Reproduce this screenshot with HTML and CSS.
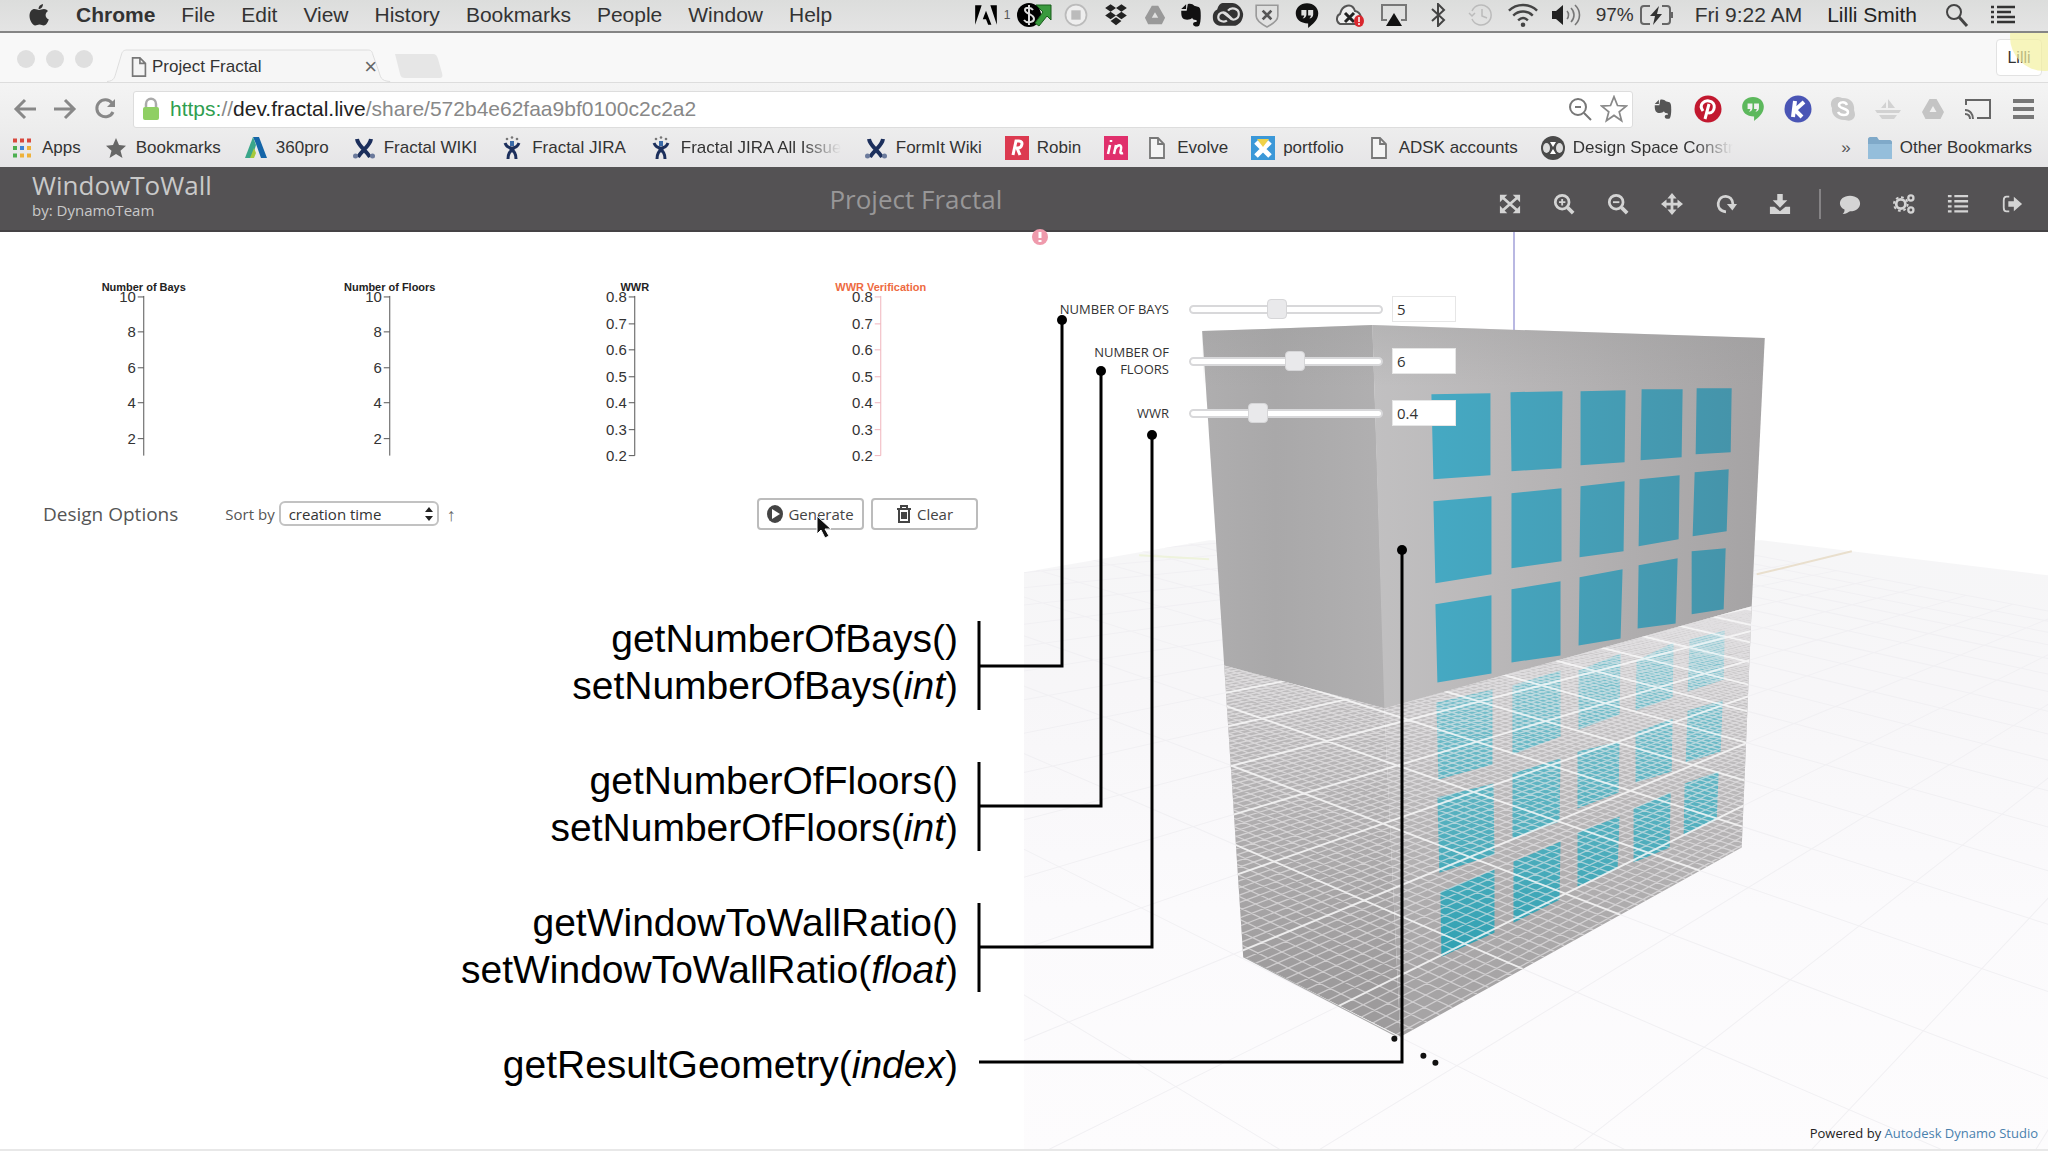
FILE: index.html
```html
<!DOCTYPE html>
<html lang="en">
<head>
<meta charset="utf-8">
<title>Project Fractal</title>
<link rel="stylesheet" href="styles.css">
</head>
<body>
<svg class="defs" width="0" height="0" aria-hidden="true">
  <symbol id="elephant" viewBox="0 0 24 24"><path d="M9 2c2-1 5 0 6 1.500l4 1c2 1 2 5 2 8 0 4-.5 8-1.500 9.500-1 1-5 1-5.500-1s1-3 3-2.500c.5-1 .5-2-.5-2-2 0-3-.5-3.500-2-1 2-5 2-7 1.500-3-1-3-5-3-8h5z M3 6.500L7.500 2v4.500z"/></symbol>
  <symbol id="page" viewBox="0 0 24 24"><path d="M5 2h8l6 6v14H5z M13 2v6h6" fill="#f4f4f4" stroke="#777" stroke-width="1.800"/></symbol>
  <symbol id="quote" viewBox="0 0 24 24"><path fill-rule="evenodd" d="M12 1c6 0 10 4 10 9 0 6-5 10-9 13v-4C6 19 2 15 2 10s4-9 10-9zM7 7v5h2.500c0 1-.5 2-1.500 2.500 2 0 3.500-1.500 3.500-3.500V7zM13 7v5h2.500c0 1-.5 2-1.500 2.500 2 0 3.500-1.500 3.500-3.500V7z"/></symbol>
  <symbol id="drive" viewBox="0 0 24 24"><path fill-rule="evenodd" d="M8.500 2h7l7.500 13-3.500 7h-15L1 15zM12 9l-3.500 6h7z"/></symbol>
  <symbol id="wiki" viewBox="0 0 24 24"><path d="M5 3c1 7 8 10 13 18M19 3c-1 7-8 10-13 18" fill="none" stroke="#1c2f5c" stroke-width="4"/><circle cx="3.500" cy="20" r="2.500" fill="#6b7a9c"/><circle cx="20.500" cy="20" r="2.500" fill="#6b7a9c"/></symbol>
  <symbol id="jira" viewBox="0 0 24 24"><path d="M5 7c2 5 5 5 7 5s5 0 7-5M8 23c0-5 1-7 7-12M16 23c0-5-1-7-7-12" fill="none" stroke="#1c2f5c" stroke-width="3"/><path d="M12 5v5" stroke="#3a6aa8" stroke-width="4"/><g fill="#777"><circle cx="7" cy="3" r="1.300"/><circle cx="12" cy="1.500" r="1.300"/><circle cx="17" cy="3" r="1.300"/></g></symbol>
</svg>

<header class="menubar">
  <nav class="menus" aria-label="Menu bar">
    <svg width="22" height="26" viewBox="0 0 22 26" fill="#333"><path d="M15 2c0 3-2 5-4.500 5C10.500 4.500 12 2.500 15 2zM11 8c1.500 0 3-1 5-1 1.500 0 3 .8 4 2-3.500 2-3 7 .8 8.500-1 3-3 6-5 6-1.600 0-2.300-1-4.300-1s-2.700 1-4.300 1C4.500 23.500 1.500 18 1.500 14c0-4.500 2.500-7 5-7 2 0 3.300 1 4.500 1z"/></svg>
    <a href="#" class="app">Chrome</a><a href="#">File</a><a href="#">Edit</a><a href="#">View</a><a href="#">History</a><a href="#">Bookmarks</a><a href="#">People</a><a href="#">Window</a><a href="#">Help</a>
  </nav>
  <div class="status">
    <svg width="36" height="26" viewBox="0 0 24 24"><path d="M2 3h6L2 21zM16 3h6v18zM12 8l5 13h-3l-2-5H9z"/></svg><span class="count">1</span>
    <svg width="44" height="28" viewBox="0 0 36 28"><circle cx="13" cy="14" r="12"/><path d="M17 9c-2-3-8-3-8 0 0 4 9 4 9 9 0 3-7 5-10 1M13 4v20" stroke="#ddd" stroke-width="2" fill="none"/><path d="M20 4h15v15l-4-4-8 10-4-3 8-11z" fill="#3a9a3e" stroke="#185c1b"/></svg>
    <svg width="40" height="28" viewBox="0 0 24 24"><circle cx="12" cy="12" r="9" fill="#eee" stroke="#bbb" stroke-width="1.500"/><path d="M8 8h8v8H8z" fill="#bbb"/></svg>
    <svg width="40" height="26" viewBox="0 0 24 24" fill="#222"><path d="M7 2l5 3.500L7 9 2 5.500zM17 2l5 3.500L17 9l-5-3.500zM7 9l5 3.500L7 16l-5-3.500zM17 9l5 3.500-5 3.500-5-3.500zM12 14l5 3.500-5 4-5-4z"/></svg>
    <svg width="38" height="22" fill="#999"><use href="#drive"/></svg>
    <svg width="34" height="26" fill="#111"><use href="#elephant"/></svg>
    <svg width="40" height="26" viewBox="0 0 30 24"><path d="M10 1h9c4 0 9 4 10 10 0 6-4 11-9 11H9c-5 0-8-3-8-8 0-4 2-6 4-7 1-4 3-6 5-6z" fill="#333"/><path d="M14 17c-2 2-8 1-8-3s5-6 8-3l5 5M15 8c3-4 10-2 10 3s-6 7-9 3l-5-4" stroke="#ddd" stroke-width="2" fill="none"/></svg>
    <svg width="38" height="26" viewBox="0 0 24 24" fill="none" stroke="#999" stroke-width="1.500"><path d="M2 3h20v10c0 5-6 8-10 10-4-2-10-5-10-10z"/><path d="M8 8l8 8M16 8l-8 8" stroke="#555" stroke-width="2.500"/></svg>
    <svg width="42" height="27" fill="#111"><use href="#quote"/></svg>
    <svg width="44" height="26" viewBox="0 0 30 26"><path d="M5 22C0 19 2 13 5 12 7 3 17 0 20 9c6 1 8 9 4 13z" fill="#eee" stroke="#555" stroke-width="2"/><path d="M10 11l9 9M19 11l-9 9" stroke="#222" stroke-width="3"/><ellipse cx="24" cy="19" rx="5" ry="6" fill="#d9272e"/><path d="M24 15v5M24 21v2" stroke="#fff" stroke-width="1.500"/></svg>
    <svg width="44" height="24" viewBox="0 0 28 24"><path d="M7 17H2V2h24v15h-5" fill="none" stroke="#777" stroke-width="2"/><path d="M14 10l8 13H6z" fill="#111"/></svg>
    <svg width="44" height="24" viewBox="0 0 24 24"><path d="M6 6l12 11-6 6V1l6 6L6 18" fill="none" stroke="#444" stroke-width="2"/></svg>
    <svg width="42" height="24" viewBox="0 0 26 24" fill="none" stroke="#bbb" stroke-width="1.500"><path d="M4 8a10 10 0 1 1 0 8M1 10l3 3 3-3M14 6v7l5 2"/></svg>
    <svg width="42" height="26" viewBox="0 0 28 24" fill="none" stroke="#444" stroke-width="2.200"><path d="M1 8c7-7 19-7 26 0M5 12.500c5-5 13-5 18 0M9.500 17c3-3 6-3 9 0"/><circle cx="14" cy="21" r="1" fill="#444"/></svg>
    <svg width="44" height="24" viewBox="0 0 30 24"><path d="M1 8h4l7-6v20l-7-6H1z" fill="#222"/><path d="M16 8c2 2 2 6 0 8M20 5c4 4 4 10 0 14M24 2c6 6 6 14 0 20" fill="none" stroke="#777" stroke-width="1.600"/></svg>
    <span class="percent">97%</span>
    <svg width="36" height="22" viewBox="0 0 36 22"><path d="M11 2H5C3 2 2 3 2 5v12c0 2 1 3 3 3h6M23 2h5c2 0 3 1 3 3v12c0 2-1 3-3 3h-5M33 8v6" fill="none" stroke="#666" stroke-width="2"/><path d="M20 2l-9 10h5l-2 9 9-11h-5z" fill="#333"/></svg>
    <time class="clock">Fri 9:22 AM</time>
    <span class="user">Lilli Smith</span>
    <svg class="find" width="24" height="24" viewBox="0 0 24 24" fill="none" stroke="#444" stroke-width="2"><circle cx="9" cy="9" r="7"/><path d="M14 14l8 9" stroke-width="3"/></svg>
    <svg width="28" height="20" viewBox="0 0 28 20" stroke="#333" stroke-width="2.500"><path d="M2 2h3M8 2h18M2 7h3M8 7h14M2 12h3M8 12h18M2 17h3M8 17h18"/></svg>
  </div>
</header>

<div class="browser">
  <div class="tabstrip">
    <div class="lights"><i></i><i></i><i></i></div>
    <div class="tab">
      <svg class="tabshape" viewBox="0 0 300 33" preserveAspectRatio="none"><path d="M0 32.500C8 32 8 28 10 22l5-16c1-4 3-5 6-5h252c4 0 5 1 6 5l6 16c2 6 2 10 12 10.500" fill="#f6f6f6" stroke="#ddd"/></svg>
      <svg width="22" height="22"><use href="#page"/></svg>
      <span>Project Fractal</span>
      <button class="close" aria-label="Close tab">×</button>
    </div>
    <svg class="newtab" width="50" height="26" viewBox="0 0 50 26"><path d="M2 1h38c3 0 4 2 5 5l4 14c1 4 0 5-3 5H12c-3 0-4-1-5-4z" fill="#e6e6e6"/></svg>
    <button class="profile">Lilli</button>
    <span class="halo"></span>
  </div>
  <div class="toolbar">
    <button aria-label="Back"><svg width="24" height="24" viewBox="0 0 24 24" class="nav"><path d="M23 12H3M12 3l-9 9 9 9"/></svg></button>
    <button aria-label="Forward"><svg width="24" height="24" viewBox="0 0 24 24" class="nav"><path d="M1 12h20M12 3l9 9-9 9"/></svg></button>
    <button aria-label="Reload"><svg width="24" height="24" viewBox="0 0 24 24" class="nav"><path d="M20 15a8.500 8.500 0 1 1-1-9"/><path d="M22 2v8h-8z" fill="#888" stroke="none"/></svg></button>
    <div class="address">
      <svg width="18" height="24" viewBox="0 0 18 24"><path d="M4 11V7c0-7 10-7 10 0v4" fill="none" stroke="#aaa" stroke-width="2.500"/><rect x="1" y="10" width="16" height="13" rx="2" fill="#8fcf63"/></svg>
      <div class="url" role="textbox" contenteditable="true" aria-label="Address"><span class="scheme">https:</span><span class="rest">//</span>dev.fractal.live<span class="rest">/share/572b4e62faa9bf0100c2c2a2</span></div>
      <svg width="24" height="24" viewBox="0 0 24 24" fill="none" stroke="#777" stroke-width="2"><circle cx="10" cy="10" r="8"/><path d="M16 16l7 7M7 10h6"/></svg>
      <svg width="28" height="28" viewBox="0 0 24 24" fill="none" stroke="#888" stroke-width="1.500"><path d="M12 1.500l3 7.500 7.500.5-6 5 2 7.500-6.500-4.500L5.500 22l2-7.500-6-5L9 9z"/></svg>
    </div>
    <div class="extensions">
      <svg width="28" height="22" fill="#555"><use href="#elephant"/></svg>
      <svg width="28" height="28" viewBox="0 0 28 28"><circle cx="14" cy="14" r="13.500" fill="#c2182f"/><path d="M9 16c-5-7 2-11 6-10 8 1 6 12 0 12-2 0-2-1-2.500-2M15 9l-4 15" fill="none" stroke="#fff" stroke-width="3"/></svg>
      <svg width="28" height="26" fill="#5cb85c"><use href="#quote"/></svg>
      <svg width="28" height="28" viewBox="0 0 28 28"><circle cx="14" cy="14" r="13.500" fill="#4a55b5"/><path d="M11 6L9 22M20 7l-9 8 7 7" fill="none" stroke="#fff" stroke-width="4"/></svg>
      <svg width="28" height="26" viewBox="0 0 26 26"><path d="M3 3c5-4 8-1 10-1 8 0 12 6 11 12 1 3 2 6-1 9-3 3-7 1-9 1C6 24 1 18 2 12 0 9 1 5 3 3z" fill="#cacaca"/><path d="M17 9c-2-4-8-3-8 0 0 4 9 3 9 7 0 4-8 4-10 0" fill="none" stroke="#fff" stroke-width="2.500"/></svg>
      <svg width="28" height="22" viewBox="0 0 28 22" fill="#d2d2d2"><path d="M14 1v9h7zM12 4v6H7zM1 12h26l-2 3H3zM5 17h18l-3 4H8z"/></svg>
      <svg width="28" height="24" fill="#c4c4c4"><use href="#drive"/></svg>
      <svg width="28" height="22" viewBox="0 0 28 22" fill="none" stroke="#666" stroke-width="2"><path d="M2 7V2h24v18H13M1 12c5 0 8 4 8 9M1 16c3 0 5 2 5 5"/></svg>
      <svg width="28" height="22" viewBox="0 0 28 22" stroke="#777" stroke-width="4"><path d="M4 3h21M4 11h21M4 19h21"/></svg>
    </div>
  </div>
  <nav class="bookmarks" aria-label="Bookmarks">
    <a href="#"><svg width="24" height="24" viewBox="0 0 24 24"><path d="M3 4.500h4M10 4.500h4M17 4.500h4" stroke="#d8493e" stroke-width="4"/><path d="M3 12h4" stroke="#4caf50" stroke-width="4"/><path d="M10 12h4" stroke="#3b82d6" stroke-width="4"/><path d="M17 12h4M10 19.500h4M17 19.500h4" stroke="#eeb13a" stroke-width="4"/><path d="M3 19.500h4" stroke="#4caf50" stroke-width="4"/></svg>Apps</a>
    <a href="#"><svg width="24" height="24" viewBox="0 0 24 24"><path d="M12 2l3 7 7 .7-5.500 5 2 7.300-6.500-4-6.500 4 2-7.300L2 9.700 9 9z" fill="#666"/></svg>Bookmarks</a>
    <a href="#"><svg width="24" height="24" viewBox="0 0 24 24"><path d="M9 1h6l8 21h-6l-5-14z" fill="#1565a8"/><path d="M9 1l3 8-4 13H1z" fill="#3aa68a"/><path d="M6 22l4-10 2 5 -2 5z" fill="#a6c93c"/></svg>360pro</a>
    <a href="#"><svg width="24" height="24"><use href="#wiki"/></svg>Fractal WIKI</a>
    <a href="#"><svg width="24" height="24"><use href="#jira"/></svg>Fractal JIRA</a>
    <a href="#"><svg width="24" height="24"><use href="#jira"/></svg><span class="faded">Fractal JIRA All Issues</span></a>
    <a href="#"><svg width="24" height="24"><use href="#wiki"/></svg>FormIt Wiki</a>
    <a href="#"><svg width="24" height="24" viewBox="0 0 24 24"><path d="M0 0h24v24H0z" fill="#dc3a50"/><path d="M8 19l3-14h3c5 0 3 7-1 7h-2M12 12l3 7" fill="none" stroke="#fff" stroke-width="3"/></svg>Robin</a>
    <a href="#" class="lone" aria-label="Invision"><svg width="24" height="24" viewBox="0 0 24 24"><path d="M0 0h24v24H0z" fill="#e0306c"/><path d="M6 9l-2 9M7 4v2M10 18l2-9M11 13c3-5 7-5 6 0-1 4-1 5 2 4" fill="none" stroke="#fff" stroke-width="2.500"/></svg></a>
    <a href="#"><svg width="24" height="24"><use href="#page"/></svg>Evolve</a>
    <a href="#"><svg width="24" height="24" viewBox="0 0 24 24"><path d="M0 0h24v24H0z" fill="#3b98d8"/><path d="M5 6l14 14M19 6L5 20" stroke="#fff" stroke-width="5"/><path d="M6 3h12l-6 8z" fill="#efd24a"/></svg>portfolio</a>
    <a href="#"><svg width="24" height="24"><use href="#page"/></svg>ADSK accounts</a>
    <a href="#"><svg width="24" height="24" viewBox="0 0 24 24"><circle cx="12" cy="12" r="12" fill="#4a4a4a"/><ellipse cx="5.500" cy="12" rx="3.500" ry="5" fill="#ddd"/><ellipse cx="18.500" cy="12" rx="3.500" ry="5" fill="#ddd"/><path d="M9 6h6l-3 5zM9 18h6l-3-5z" fill="#fff"/></svg><span class="faded">Design Space Construction</span></a>
    <button class="more" aria-label="More bookmarks">»</button>
    <a href="#"><svg width="24" height="24" viewBox="0 0 24 24"><path d="M0 3c0-1 1-2 2-2h7l2 3h11c1 0 2 1 2 2v16H0z" fill="#7fa9c9"/><path d="M0 8h24v15H0z" fill="#95bedb"/></svg>Other Bookmarks</a>
  </nav>
</div>

<header class="appbar">
  <div class="project"><h1>WindowToWall</h1><p>by: DynamoTeam</p></div>
  <div class="product">Project Fractal</div>
  <div class="tools">
    <button aria-label="Fit view"><svg viewBox="0 0 24 24"><path d="M1 2h8L1 10zM23 2v8l-8-8zM1 22v-8l8 8zM23 22h-8l8-8z" fill="#d4d4d4" stroke="none"/><path d="M4 5l16 14M20 5L4 19"/></svg></button>
    <button aria-label="Zoom in"><svg viewBox="0 0 24 24"><circle cx="10" cy="10" r="7.500"/><path d="M16 16l6 6" stroke-width="4"/><path d="M10 6.500v7M6.500 10h7" stroke-width="2"/></svg></button>
    <button aria-label="Zoom out"><svg viewBox="0 0 24 24"><circle cx="10" cy="10" r="7.500"/><path d="M16 16l6 6" stroke-width="4"/><path d="M6.500 10h7" stroke-width="2"/></svg></button>
    <button aria-label="Pan"><svg viewBox="0 0 24 24"><path d="M12 3v18M3 12h18"/><path d="M12 0l5 6H7zM12 24l5-6H7zM0 12l6-5v10zM24 12l-6-5v10z" fill="#d4d4d4" stroke="none"/></svg></button>
    <button aria-label="Orbit"><svg viewBox="0 0 24 24"><path d="M12 20.500C5 20 3 15 3.500 11 5 1 19 1 19.500 12"/><path d="M13 12h11l-5 7z" fill="#d4d4d4" stroke="none"/></svg></button>
    <button aria-label="Download"><svg viewBox="0 0 24 24"><path d="M9 1h6v7h5l-8 8-8-8h5zM1 15h5l6 5 6-5h5v8H1z" fill="#d4d4d4" stroke="none"/></svg></button>
    <span class="rule"></span>
    <button aria-label="Comments"><svg viewBox="0 0 24 24"><path d="M12 3c7 0 11 4 11 8.500S19 20 12 20c-2 1-4 3-8 3 2-2 2-3 2-5-3-1-5-4-5-6.500C1 7 5 3 12 3z" fill="#d4d4d4" stroke="none"/></svg></button>
    <button aria-label="Settings"><svg viewBox="0 0 24 24"><circle cx="8.500" cy="12" r="5"/><circle cx="8.500" cy="12" r="7.500" stroke-width="2" stroke-dasharray="3 2.900"/><circle cx="19.500" cy="5.500" r="2.800" stroke-width="2.500"/><circle cx="19.500" cy="18.500" r="2.800" stroke-width="2.500"/></svg></button>
    <button aria-label="List"><svg viewBox="0 0 24 24"><path d="M1 3.500h4M8 3.500h15M1 9h4M8 9h15M1 14.500h4M8 14.500h15M1 20h4M8 20h15" stroke-width="2.500"/></svg></button>
    <button aria-label="Sign out"><svg viewBox="0 0 24 24"><path d="M9 4H6C3 4 3 6 3 8v8c0 2 0 4 3 4h3" stroke-width="2"/><path d="M8 9h6V4l9 8-9 8v-5H8z" fill="#d4d4d4" stroke="none"/></svg></button>
  </div>
</header>

<main class="workspace">
  <section class="panel">
    <div class="charts">
      <svg class="chart" viewBox="0 0 246 184" id="bays"><text class="title" x="122" y="23">Number of Bays</text></svg>
      <svg class="chart" viewBox="0 0 246 184" id="floors"><text class="title" x="122" y="23">Number of Floors</text></svg>
      <svg class="chart" viewBox="0 0 246 184" id="wwr"><text class="title" x="122" y="23">WWR</text></svg>
      <svg class="chart check" viewBox="0 0 246 184" id="verify"><text class="title" x="122" y="23">WWR Verification</text></svg>
    </div>
    <div class="options">
      <h2>Design Options</h2>
      <label for="sort">Sort by</label>
      <span class="select"><select id="sort"><option>creation time</option></select><svg width="10" height="16" viewBox="0 0 10 16"><path d="M5 1l4 5H1zM5 15l4-5H1z" fill="#222"/></svg></span>
      <button class="order" aria-label="Ascending">↑</button>
      <button class="action generate"><svg width="16" height="18" viewBox="0 0 16 18"><ellipse cx="8" cy="9" rx="8" ry="9" fill="#444"/><path d="M5 4l8 5-8 5z" fill="#fff"/></svg>Generate
        <svg class="cursor" width="16" height="24" viewBox="0 0 16 24"><path d="M1 1v18l4-4 4 8 4-2-4-7h6z" fill="#111" stroke="#fff"/></svg></button>
      <button class="action"><svg width="16" height="18" viewBox="0 0 16 18" fill="none" stroke="#444" stroke-width="2"><path d="M3 5v12h10V5M1 4h14M5 4V1h6v3M6 7v7M8 7v7M10 7v7"/></svg>Clear</button>
    </div>
    <div class="api">
      <p>getNumberOfBays()<br>setNumberOfBays(<em>int</em>)</p>
      <p>getNumberOfFloors()<br>setNumberOfFloors(<em>int</em>)</p>
      <p>getWindowToWallRatio()<br>setWindowToWallRatio(<em>float</em>)</p>
      <p>getResultGeometry(<em>index</em>)</p>
    </div>
  </section>

  <section class="viewer">
    <svg class="scene" viewBox="1025 232 1023 918" preserveAspectRatio="xMinYMin slice" role="img" aria-label="Building model">
      <defs>
        <linearGradient id="left" x1="0" y1="0" x2="1" y2="0"><stop offset="0" stop-color="#afaeaf"/><stop offset=".4" stop-color="#a9a8a9"/><stop offset="1" stop-color="#b1b0b1"/></linearGradient>
        <linearGradient id="front" x1="0" y1="0" x2="1" y2="0"><stop offset="0" stop-color="#c1c0c1"/><stop offset=".3" stop-color="#bab8b9"/><stop offset="1" stop-color="#a5a3a4"/></linearGradient>
        <linearGradient id="topshade" x1="0" y1="0" x2="0" y2="1"><stop offset="0" stop-color="#999" stop-opacity=".3"/><stop offset=".5" stop-color="#999" stop-opacity="0"/></linearGradient>
        <linearGradient id="glass" gradientUnits="userSpaceOnUse" x1="1432" y1="0" x2="1732" y2="0"><stop offset="0" stop-color="#45a9c3"/><stop offset="1" stop-color="#4594aa"/></linearGradient>
        <linearGradient id="ground" x1="0" y1="0" x2="0" y2="1"><stop offset="0" stop-color="#f6f6f7"/><stop offset=".25" stop-color="#f7f6f8"/><stop offset=".6" stop-color="#fbfafc"/><stop offset="1" stop-color="#fdfcfd"/></linearGradient>
        <linearGradient id="veil" gradientUnits="userSpaceOnUse" x1="0" y1="606" x2="0" y2="980"><stop offset="0" stop-color="#f4f2f4" stop-opacity=".5"/><stop offset=".4" stop-color="#f4f2f4" stop-opacity=".3"/><stop offset="1" stop-color="#f4f2f4" stop-opacity="0"/></linearGradient>
        <clipPath id="under"><path d="M1225 665L1385 708 1752 606 1742 847 1400 1036 1244 956z"/></clipPath>
        <clipPath id="floorclip"><path d="M1025 572L1210 540H1762L2048 575V1152H1025z"/></clipPath>
      </defs>
      <path d="M1025 572L1210 540H1762L2048 575V1152H1025z" fill="url(#ground)"/>
      <g clip-path="url(#floorclip)"><path id="floor-major" fill="none" stroke="#f1f0f3"/></g>
      <path d="M1140 555l70 4" stroke="#eef3dc" stroke-width="2"/><path d="M1757 574l95-23" stroke="#e9dfcd" stroke-width="2"/><path d="M1514.500 232v98" stroke="#b9b8e2" stroke-width="2"/>
      <path d="M1203 331l170-6 13 383-161-43z" fill="url(#left)"/>
      <path d="M1373 325l392 13-13 268-367 102z" fill="url(#front)"/>
      <path d="M1203 331l170-6 392 13-3 70-389 0-167 40z" fill="url(#topshade)"/>
      <path d="M1225 665l160 43 16 328-157-80z" fill="#9d9b9c"/>
      <path d="M1385 708l367-102-10 241-341 189z" fill="#a6a4a5"/>
      <g fill="url(#glass)">
        <path d="M1432 394l59-1v82l-57 4zM1434 501l58-5v78l-56 9zM1436 604l56-9v78l-54 9z"/>
        <path d="M1511 392l52-1-1 77-50 3zM1512 493l50-5v73l-50 7zM1512 589l49-8v74l-49 7z"/>
        <path d="M1581 391l45-1-1 72-44 3zM1581 486l44-5-1 70-44 6zM1580 577l43-8-2 69-42 7z"/>
        <path d="M1642 389h41l-1 68-41 3zM1640 479l40-4-1 64-40 7zM1639 565l39-7-2 65-38 5z"/>
        <path d="M1697 388h35l-1 64-35 2zM1695 472l34-3-2 62-34 5zM1692 551l34-3-2 61-32 5z"/>
        <g fill="#299eb0">
          <path d="M1437 702l56-13v75l-54 15zM1438 797l56-14 1 71-55 18zM1441 891l54-22v63l-53 24z"/>
          <path d="M1513 685l48-15v66l-48 18zM1513 773l48-15-1 63-47 17zM1514 861l47-20-1 58-46 23z"/>
          <path d="M1579 670l42-17-1 61-41 15zM1578 751l42-10-1 51-41 16zM1578 832l42-16-2 52-40 18z"/>
          <path d="M1637 660l37-18-1 55-37 13zM1636 732l37-14-1 53-36 11zM1634 808l37-16-1 55-36 15z"/>
          <path d="M1690 639l35-9-1 49-36 12zM1688 710l35-10-2 51-35 11zM1685 783l34-12-2 48-33 15z"/>
        </g>
      </g>
      <g clip-path="url(#under)" fill="none" stroke="#fff">
        <path id="grid-minor" stroke="#ebe9eb" stroke-opacity=".6" stroke-width="1.300"/>
        <path d="M1200 600h570v440h-570z" fill="url(#veil)" stroke="none"/>
        <path id="grid-major" stroke-opacity=".65" stroke-width="2"/>
      </g>
      <path d="M1244 956l154 80" stroke="#aaa" fill="none"/>
      <g fill="#111"><circle cx="1395" cy="1038" r="3"/><circle cx="1424" cy="1055" r="3"/><circle cx="1436" cy="1062" r="3"/></g>
    </svg>
    <svg class="alert" width="18" height="18" viewBox="0 0 18 18"><circle cx="9" cy="9" r="8" fill="#ef9aac"/><path d="M9 4v6M9 12v2" stroke="#fff" stroke-width="3"/></svg>
    <form class="inputs">
      <label for="r1">NUMBER OF BAYS</label><input type="range" id="r1" min="1" max="10" value="5"><input class="value" aria-label="Bays value" value="5">
      <label for="r2">NUMBER OF FLOORS</label><input type="range" id="r2" min="1" max="10" value="6"><input class="value" aria-label="Floors value" value="6">
      <label for="r3">WWR</label><input type="range" id="r3" min="0.2" max="0.8" step="0.1" value="0.4"><input class="value" aria-label="WWR value" value="0.4">
    </form>
    <p class="credit">Powered by <a href="#">Autodesk Dynamo Studio</a></p>
  </section>

  <svg class="leaders" viewBox="0 232 2048 918" preserveAspectRatio="xMinYMin slice" aria-hidden="true">
    <path d="M979 621v89M979 666h83V320M979 762v89M979 806h122V371M979 903v89M979 947h173V435M979 1062h423V550"/>
    <circle cx="1062" cy="320" r="5"/><circle cx="1101" cy="371" r="5"/><circle cx="1152" cy="435" r="5"/><circle cx="1402" cy="550" r="5"/>
  </svg>
</main>
<script src="scene.js"></script>
</body>
</html>
```
FILE: styles.css
```css
* { box-sizing: border-box; }
body { margin: 0; background: #fff; color: #333; font-family: "Liberation Sans", Arial, sans-serif; }
button { border: 0; padding: 0; background: none; font: inherit; color: inherit; }
a { color: inherit; text-decoration: none; }
svg { flex: none; }
h1, h2, p { margin: 0; font-weight: 400; }
.defs { position: absolute; }

.menubar { display: flex; justify-content: space-between; align-items: center; height: 33px; padding: 0 31px 1px 28px; background: linear-gradient(#dcdddc, #e4e4e4); border-bottom: 2px solid #858585; font-size: 21px; line-height: 24px; white-space: nowrap; }
.menus { display: flex; align-items: center; gap: 26px; }
.app { font-weight: 700; }
.status { display: flex; align-items: center; }
.count { width: 8px; font-size: 12px; color: #555; }
.percent { font-size: 19px; margin: 0 5px 0 8px; }
.clock { margin-left: 20px; }
.user { margin-left: 25px; color: #222; }
.find { margin: 0 20px 0 28px; }

.browser { background: #ececec; }
.tabstrip { position: relative; display: flex; align-items: flex-end; height: 50px; background: #f8f8f8; border-bottom: 1px solid #ddd; overflow: hidden; }
.lights { display: flex; gap: 11px; padding: 0 14px 14px 17px; }
.lights i { width: 18px; height: 18px; border-radius: 50%; background: #dfdfdf; }
.tab { position: relative; display: flex; align-items: center; gap: 2px; width: 286px; height: 33px; padding: 2px 16px 0 21px; font-size: 17px; }
.tab > :not(.tabshape) { position: relative; }
.tab .tabshape { position: absolute; inset: 0; width: 100%; height: 100%; }
.close { margin-left: auto; font-size: 22px; color: #666; line-height: 24px; }
.newtab { margin-bottom: 3px; }
.profile { margin: 0 6px 6px auto; width: 46px; height: 37px; border: 1px solid #e2e2e2; border-radius: 4px; background: #fff; font-size: 16px; }
.halo { position: absolute; right: -30px; top: -30px; width: 68px; height: 68px; border-radius: 50%; background: #f4f1a0; opacity: .7; }

.toolbar { display: flex; align-items: center; height: 45px; padding: 7px 11px 0 13px; gap: 16px; background: linear-gradient(#f4f4f4, #ededed); }
.toolbar button { display: flex; }
.nav { fill: none; stroke: #888; stroke-width: 3; }
.address { flex: 1; display: flex; align-items: center; gap: 8px; height: 37px; padding: 0 4px 0 8px; background: #fff; border: 1px solid #ddd; border-radius: 3px; }
.url { flex: 1; font-size: 21px; line-height: 28px; color: #222; outline: 0; margin-left: 2px; }
.scheme { color: #2f9e4f; }
.rest { color: #888; }
.extensions { display: flex; align-items: center; gap: 17px; }

.bookmarks { display: flex; align-items: center; gap: 23px; height: 39px; padding: 0 16px 0 10px; background: linear-gradient(#ededed, #e6e5e7); font-size: 17px; line-height: 24px; white-space: nowrap; }
.bookmarks a { display: flex; align-items: center; gap: 8px; }
.bookmarks .lone { margin-right: -6px; }
.faded { width: 160px; overflow: hidden; -webkit-mask-image: linear-gradient(90deg, #000 75%, transparent); mask-image: linear-gradient(90deg, #000 75%, transparent); }
.more { margin-left: auto; margin-right: -6px; color: #555; }

.appbar { display: grid; grid-template-columns: 40.5% auto 1fr; align-items: center; height: 65px; background: #545254; border-bottom: 2px solid #454345; color: #c9c9c9; font-family: "Open Sans", sans-serif; }
.project { padding-left: 32px; }
h1 { font-size: 26px; line-height: 30px; }
.project p { font-size: 15px; line-height: 20px; padding-bottom: 8px; }
.product { font-size: 26px; line-height: 30px; color: #989798; }
.tools { display: flex; align-items: center; justify-content: flex-end; gap: 32px; padding: 10px 25px 0 0; }
.tools button { display: flex; }
.tools svg { width: 22px; height: 22px; fill: none; stroke: #d4d4d4; stroke-width: 3; }
.rule { width: 2px; height: 30px; margin: 0 -14px 0 -4px; background: #858385; }

.workspace { position: relative; display: flex; border-bottom: 2px solid #e8e8e8; }
.panel { width: 50%; padding-top: 36px; font-family: "Open Sans", sans-serif; }
.charts { display: grid; grid-template-columns: repeat(4, 1fr); padding: 0 20px 0 22px; }
.chart { display: block; width: 100%; overflow: visible; font: 15px "Liberation Sans", Arial, sans-serif; fill: #333; }
.chart .title { font-size: 11px; font-weight: 700; text-anchor: middle; fill: #222; }
.chart .tick { text-anchor: end; }
.chart .axis { stroke: #555; stroke-width: 1; fill: none; }
.chart.check .title { fill: #ee6a41; }
.chart.check .axis { stroke: #f0b4bc; }
.options { display: flex; align-items: center; padding: 46px 46px 0 43px; font-size: 15px; line-height: 22px; color: #555; }
h2 { font-size: 19px; line-height: 30px; margin-right: 47px; }
.select { position: relative; display: flex; align-items: center; margin: 0 8px 0 4px; }
.select svg { position: absolute; right: 5px; }
select { appearance: none; width: 160px; height: 25px; padding: 0 8px; border: 2px solid #c2c2c2; border-radius: 6px; background: #fff; color: #333; font: 15px/20px "Open Sans", sans-serif; }
.order { font-size: 18px; color: #666; }
.action { position: relative; display: flex; align-items: center; justify-content: center; gap: 5px; width: 107px; height: 32px; margin-left: 7px; border: 2px solid #bcbcbc; border-radius: 4px; background: #fff; color: #444; }
.generate { margin-left: auto; }
.cursor { position: absolute; left: 57px; top: 15px; }
.api { display: flex; flex-direction: column; gap: 48px; padding: 85px 66px 61px 0; font: 39px/47px "Liberation Sans", Arial, sans-serif; color: #000; text-align: right; }

.viewer { position: relative; width: 50%; }
.scene { position: absolute; inset: 0; width: 100%; height: 100%; }
.alert { position: absolute; left: 7px; top: -4px; }
.inputs { position: absolute; left: 30px; top: 64px; display: grid; grid-template-columns: 116px 194px 64px; column-gap: 9px; row-gap: 22px; align-items: center; font: 13px/17px "Open Sans", sans-serif; color: #333; }
.inputs label { text-align: right; margin-right: 1px; }
.inputs label + input { margin: 0 0 0 10px; }
input[type="range"] { appearance: none; width: 194px; height: 9px; margin: 0; border: 2px solid #d8d8da; border-radius: 5px; background: #fff; }
input[type="range"]::-webkit-slider-thumb { appearance: none; width: 20px; height: 20px; border: 1px solid #d6d6d8; border-radius: 4px; background: #e9e9eb; }
.value { width: 64px; height: 26px; margin-left: 10px; padding: 0 4px; border: 1px solid #e6e6e6; background: #fff; color: #333; font: 15px/20px "Open Sans", sans-serif; }
.credit { position: absolute; right: 10px; bottom: 7px; font: 13px/18px "Open Sans", sans-serif; color: #222; }
.credit a { color: #4a81ad; }
.leaders { position: absolute; inset: 0; width: 100%; height: 100%; pointer-events: none; }
.leaders path { fill: none; stroke: #000; stroke-width: 3; }
```
FILE: scene.js
```js
const NS = 'http://www.w3.org/2000/svg';

// Empty axes: label text and its height on the axis
function drawAxis(id, labels, step) {
  const chart = document.getElementById(id);
  let d = 'M122 28V188';
  labels.forEach((label, i) => {
    const y = Math.round(29 + i * step);
    d += `M116 ${y}h6`;
    const text = document.createElementNS(NS, 'text');
    text.setAttribute('class', 'tick');
    text.setAttribute('x', 114);
    text.setAttribute('y', y + 5);
    text.textContent = label;
    chart.append(text);
  });
  const axis = document.createElementNS(NS, 'path');
  axis.setAttribute('class', 'axis');
  axis.setAttribute('d', d);
  chart.append(axis);
}
drawAxis('bays', ['10', '8', '6', '4', '2'], 35.4);
drawAxis('floors', ['10', '8', '6', '4', '2'], 35.4);
const ratios = ['0.8', '0.7', '0.6', '0.5', '0.4', '0.3', '0.2'];
drawAxis('wwr', ratios, 26.5);
drawAxis('verify', ratios, 26.5);

// Ground grid in perspective, from four known crossings of major lines
const pairs = [[0, 0, 1465, 943], [2, 0, 1275, 861], [0, 1, 1566, 893], [3, 2, 1398, 765]];
const rows = [];
for (const [u, v, x, y] of pairs) {
  rows.push([u, v, 1, 0, 0, 0, -u * x, -v * x, x]);
  rows.push([0, 0, 0, u, v, 1, -u * y, -v * y, y]);
}
for (let c = 0; c < 8; c++) {
  let p = c;
  for (let r = c; r < 8; r++) if (Math.abs(rows[r][c]) > Math.abs(rows[p][c])) p = r;
  [rows[c], rows[p]] = [rows[p], rows[c]];
  for (let r = 0; r < 8; r++) {
    if (r === c) continue;
    const f = rows[r][c] / rows[c][c];
    for (let k = c; k < 9; k++) rows[r][k] -= f * rows[c][k];
  }
}
const h = rows.map((row, i) => row[8] / row[i]);
const depth = (u, v) => h[6] * u + h[7] * v + 1;
const project = (u, v) => {
  const w = depth(u, v);
  return [(h[0] * u + h[1] * v + h[2]) / w, (h[3] * u + h[4] * v + h[5]) / w]
    .map(n => n.toFixed(1)).join(' ');
};
function segment(a, b) {
  const near = 0.3;
  let wa = depth(...a), wb = depth(...b);
  if (wa < near && wb < near) return '';
  const cut = () => {
    const t = (near - wa) / (wb - wa);
    return [a[0] + (b[0] - a[0]) * t, a[1] + (b[1] - a[1]) * t];
  };
  if (wa < near) a = cut();
  else if (wb < near) b = cut();
  return `M${project(...a)}L${project(...b)}`;
}
function grid(step) {
  let d = '';
  for (let i = -6; i <= 16; i += step) {
    d += segment([i, -6], [i, 16]) + segment([-6, i], [16, i]);
  }
  return d;
}
document.getElementById('grid-minor').setAttribute('d', grid(0.1));
document.getElementById('grid-major').setAttribute('d', grid(1));
document.getElementById('floor-major').setAttribute('d', grid(1));
```
